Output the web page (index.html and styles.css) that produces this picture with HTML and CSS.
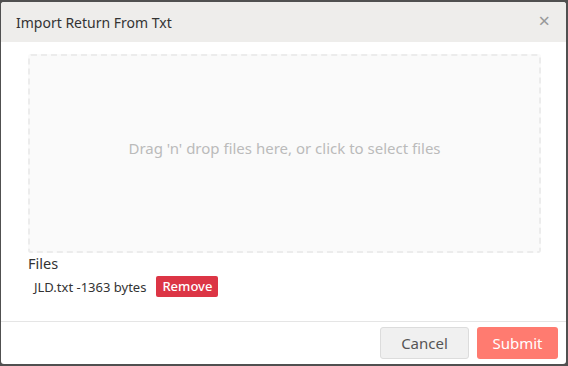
FILE: index.html
```html
<!DOCTYPE html>
<html lang="en">
<head>
    <meta charset="UTF-8">
    <meta name="viewport" content="width=device-width, initial-scale=1.0">
    <title>Import Return From Txt</title>
    <link rel="stylesheet" href="styles.css">
</head>
<body>

    <div class="modal">
        <div class="modal-header">
            <div class="modal-title">Import Return From Txt</div>
            <div class="close">&times;</div>
        </div>
        <div class="modal-body">
            <div class="dropzone">Drag 'n' drop files here, or click to select files</div>
            <div class="files-title">Files</div>
            <div class="file-row">
                <span class="file-name">JLD.txt -1363 bytes</span>
                <span class="remove">Remove</span>
            </div>
        </div>
        <div class="modal-footer">
            <div class="btn cancel">Cancel</div>
            <div class="btn submit">Submit</div>
        </div>
    </div>

</body>
</html>
```

FILE: styles.css
```css
body {
    margin: 0;
    height: 366px;
    overflow: hidden;
    background-color: #505050;
    font-family: "Noto Sans", "DejaVu Sans", sans-serif;
}

.modal {
    margin: 2px 0 0 1px;
    width: 565px;
    height: 362px;
    background-color: #fff;
    border-radius: 3px;
    display: flex;
    flex-direction: column;
    overflow: hidden;
}

.modal-header {
    height: 40px;
    background-color: #eeedeb;
    display: flex;
    align-items: center;
    justify-content: space-between;
    padding: 0 16px 0 15px;
    box-sizing: border-box;
}

.modal-title {
    font-size: 14px;
    color: #333;
}

.close {
    font-size: 20px;
    color: #999;
    line-height: 1;
    margin-top: -2px;
}

.modal-body {
    flex: 1;
    padding: 12px 25px 0 27px;
}

.dropzone {
    height: 199px;
    padding-bottom: 11px;
    border: 2px dashed #ececec;
    border-radius: 3px;
    background-color: #fafafa;
    box-sizing: border-box;
    display: flex;
    align-items: center;
    justify-content: center;
    font-size: 15px;
    color: #bbb;
}

.files-title {
    margin-top: 0;
    font-size: 14.5px;
    color: #333;
}

.file-row {
    display: flex;
    align-items: center;
    gap: 10px;
    padding-left: 6px;
    margin-top: 3px;
}

.file-name {
    font-size: 13px;
    color: #333;
}

.remove {
    background-color: #dc3545;
    color: #fff;
    font-size: 13px;
    font-weight: 500;
    padding: 1px 6px 2px;
    border-radius: 2px;
}

.modal-footer {
    border-top: 1px solid #e5e5e5;
    display: flex;
    justify-content: flex-end;
    gap: 8px;
    padding: 5px 8px 5px;
}

.btn {
    height: 32px;
    box-sizing: border-box;
    display: flex;
    align-items: center;
    justify-content: center;
    font-size: 15px;
    border-radius: 3px;
}

.btn.cancel {
    width: 89px;
    background-color: #f0f0f0;
    border: 1px solid #dcdcdc;
    color: #555;
}

.btn.submit {
    width: 81px;
    background-color: #ff7b70;
    color: #fff;
}
```
